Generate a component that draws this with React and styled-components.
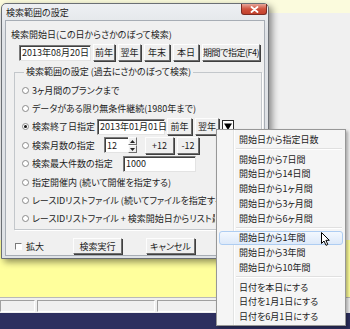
import styled, { createGlobalStyle } from 'styled-components';

const GlobalStyle = createGlobalStyle`
  html, body {
    margin: 0;
    padding: 0;
  }
  body {
    width: 350px;
    height: 329px;
    overflow: hidden;
    background: #f0f0f0;
  }
`;

const Desktop = styled.div`
  position: relative;
  width: 350px;
  height: 329px;
  overflow: hidden;
  display: flex;
  flex-direction: column;
  font-family: "Noto Sans CJK JP", "Liberation Sans", sans-serif;
  font-size: 9px;
  font-feature-settings: "palt";
  color: #1c1c1c;
`;

const TopBand = styled.div`
  height: 13px;
  background: #fbfbdd;
`;

const GrayArea = styled.div`
  height: 227px;
  background: #f0f0f0;
`;

const YellowArea = styled.div`
  flex: 1;
  background: #ffff9c;
`;

const StatusBar = styled.div`
  height: 16px;
  display: flex;
  gap: 2px;
  padding: 2px 0 0 0;
  box-sizing: border-box;
  background: #f0f0f0;
  border-top: 1px solid #b9b9b9;
`;

const StatusPanel = styled.div`
  width: ${(p) => p.$w}px;
  height: 12px;
  box-sizing: border-box;
  border: 1px solid;
  border-color: #a0a0a0 #fff #fff #a0a0a0;
`;

const NavyBar = styled.div`
  height: 16px;
  background: #2d2f5f;
`;

/* ---------- dialog window ---------- */

const Dialog = styled.div`
  position: absolute;
  left: 1px;
  top: 3px;
  width: 268px;
  height: 256px;
  box-sizing: border-box;
  display: flex;
  flex-direction: column;
  background: linear-gradient(#eef0f3, #dfe2e6 30px, #dfe2e6);
  border: 1px solid #6b6f75;
  border-radius: 5px 5px 0 0;
  box-shadow: 3px 3px 7px rgba(0, 0, 0, 0.45);
`;

const TitleBar = styled.div`
  height: 15px;
  flex: none;
  display: flex;
  align-items: flex-start;
  padding-left: 4px;
`;

const TitleText = styled.span`
  line-height: 15px;
  padding-top: 1px;
`;

const CloseButton = styled.div`
  margin-left: auto;
  margin-right: 1px;
  width: 26px;
  height: 11px;
  box-sizing: border-box;
  border: 1px solid #7b2b22;
  border-top: none;
  border-radius: 0 0 3px 3px;
  background: linear-gradient(#e7a69a, #d0523d 50%, #c2412c);
  display: flex;
  align-items: center;
  justify-content: center;
`;

const Client = styled.div`
  flex: 1;
  margin: 1px 3px 2px 3px;
  background: #f0f0f0;
  border: 1px solid #a7adb5;
  padding: 8px 0 0 5px;
  display: flex;
  flex-direction: column;
`;

const Caption = styled.div`
  line-height: 12px;
  white-space: nowrap;
`;

const Row = styled.div`
  display: flex;
  align-items: center;
  gap: ${(p) => p.$gap ?? 2}px;
  margin-left: ${(p) => p.$indent ?? 0}px;
  margin-top: ${(p) => p.$top ?? 0}px;
`;

const Button = styled.div`
  width: ${(p) => p.$w}px;
  height: ${(p) => p.$h ?? 17}px;
  box-sizing: border-box;
  display: flex;
  align-items: center;
  justify-content: center;
  white-space: nowrap;
  letter-spacing: ${(p) => (p.$tight ? '-0.5px' : '0')};
  background: #efefef;
  border: 1px solid;
  border-color: #fdfdfd #6e6e6e #6e6e6e #fdfdfd;
  box-shadow: 1px 1px 0 #3f3f3f;
  margin-right: 1px;
`;

const TextBox = styled.div`
  width: ${(p) => p.$w}px;
  height: 16px;
  box-sizing: border-box;
  display: flex;
  align-items: center;
  padding-left: 2px;
  white-space: nowrap;
  background: #fff;
  border: 1px solid;
  border-color: #7a7a7a #e3e3e3 #e3e3e3 #7a7a7a;
  box-shadow: inset 1px 1px 0 #404040;
`;

const Spinner = styled.div`
  width: 9px;
  height: 16px;
  display: flex;
  flex-direction: column;
  margin-left: -2px;
`;

const SpinHalf = styled.div`
  flex: 1;
  box-sizing: border-box;
  background: #efefef;
  border: 1px solid;
  border-color: #fdfdfd #6e6e6e #6e6e6e #fdfdfd;
  display: flex;
  align-items: center;
  justify-content: center;
`;

const DropButton = styled.div`
  width: 12px;
  height: 14px;
  box-sizing: border-box;
  background: #fff;
  border: 1px solid #2a2a2a;
  display: flex;
  align-items: center;
  justify-content: center;
`;

const Group = styled.fieldset`
  margin: 5px 2px 0 3px;
  padding: 0 0 0 7px;
  height: 162px;
  border: 1px solid #c3c7cb;
  box-shadow: 1px 1px 0 #fff;
  min-width: 0;
`;

const Legend = styled.legend`
  padding: 0 2px;
  margin-left: 2px;
  line-height: 12px;
  white-space: nowrap;
`;

const Options = styled.div`
  display: grid;
  grid-auto-rows: 18.4px;
  margin-top: 3px;
`;

const Option = styled.div`
  display: flex;
  align-items: center;
  white-space: nowrap;
`;

const RadioDot = styled.span`
  width: 7px;
  height: 7px;
  flex: none;
  box-sizing: border-box;
  border-radius: 50%;
  border: 1px solid #8a8a8a;
  background: #fff;
  margin-right: 3px;
  display: flex;
  align-items: center;
  justify-content: center;

  &::after {
    content: "";
    width: 3px;
    height: 3px;
    border-radius: 50%;
    background: ${(p) => (p.$on ? '#111' : 'transparent')};
  }
`;

const OptionText = styled.span`
  width: ${(p) => (p.$w ? `${p.$w}px` : 'auto')};
  flex: none;
  overflow: hidden;
`;

const BottomRow = styled.div`
  display: flex;
  align-items: center;
  margin: 8px 0 0 4px;
`;

const CheckBox = styled.span`
  width: 7px;
  height: 7px;
  box-sizing: border-box;
  border: 1px solid;
  border-color: #7a7a7a #fff #fff #7a7a7a;
  background: #fff;
  margin-right: 4px;
`;

const CheckLabel = styled.span`
  width: 47px;
`;

/* ---------- popup menu ---------- */

const Menu = styled.div`
  position: absolute;
  left: 216px;
  top: 129px;
  width: 130px;
  height: 197px;
  box-sizing: border-box;
  padding: 2px 0;
  border: 1px solid #979797;
  background:
    linear-gradient(to right, transparent 16px, #e2e3e3 16px, #e2e3e3 17px, #fff 17px, #fff 18px, transparent 18px),
    #f5f5f5;
  box-shadow: 2px 2px 3px rgba(0, 0, 0, 0.3);
`;

const MenuItem = styled.div`
  height: 14.75px;
  box-sizing: border-box;
  margin: 0 2px;
  padding-left: 19px;
  display: flex;
  align-items: center;
  white-space: nowrap;
  border: 1px solid ${(p) => (p.$active ? '#aecdf2' : 'transparent')};
  border-radius: 3px;
  background: ${(p) => (p.$active ? 'linear-gradient(#f3f8fe, #dde9f9)' : 'transparent')};
`;

const MenuSeparator = styled.div`
  height: 5px;
  margin-left: 19px;
  margin-right: 3px;
  display: flex;
  flex-direction: column;
  justify-content: center;

  &::before {
    content: "";
    height: 1px;
    background: #e0e0e0;
  }
  &::after {
    content: "";
    height: 1px;
    background: #fff;
  }
`;

const Cursor = styled.svg`
  position: absolute;
  left: 321px;
  top: 232px;
`;

const menuGroups = [
  ['開始日から指定日数'],
  ['開始日から7日間', '開始日から14日間', '開始日から1ヶ月間', '開始日から3ヶ月間', '開始日から6ヶ月間'],
  ['開始日から1年間', '開始日から3年間', '開始日から10年間'],
  ['日付を本日にする', '日付を1月1日にする', '日付を6月1日にする'],
];

const ArrowUp = () => (
  <svg width="5" height="3" viewBox="0 0 5 3"><path d="M0 3 L2.5 0 L5 3 Z" fill="#222" /></svg>
);

const ArrowDown = () => (
  <svg width="5" height="3" viewBox="0 0 5 3"><path d="M0 0 L2.5 3 L5 0 Z" fill="#222" /></svg>
);

export default function App() {
  return (
    <>
      <GlobalStyle />
      <Desktop>
        <TopBand />
        <GrayArea />
        <YellowArea />
        <StatusBar>
          <StatusPanel $w={35} />
          <StatusPanel $w={118} />
          <StatusPanel $w={120} />
        </StatusBar>
        <NavyBar />

        <Dialog>
          <TitleBar>
            <TitleText>検索範囲の設定</TitleText>
            <CloseButton>
              <svg width="9" height="7" viewBox="0 0 9 7">
                <path d="M1.5 1 L7.5 6 M7.5 1 L1.5 6" stroke="#fff" strokeWidth="1.8" strokeLinecap="round" />
              </svg>
            </CloseButton>
          </TitleBar>

          <Client>
            <Caption>検索開始日(この日からさかのぼって検索)</Caption>
            <Row $indent={8} $top={3}>
              <TextBox $w={72}>2013年08月20日</TextBox>
              <Button $w={22}>前年</Button>
              <Button $w={23}>翌年</Button>
              <Button $w={26}>年末</Button>
              <Button $w={26}>本日</Button>
              <Button $w={58} $tight>期間で指定(F4)</Button>
            </Row>

            <Group>
              <Legend>検索範囲の設定 (過去にさかのぼって検索)</Legend>
              <Options>
                <Option><RadioDot />3ヶ月間のブランクまで</Option>
                <Option><RadioDot />データがある限り無条件継続(1980年まで)</Option>
                <Option>
                  <RadioDot $on />
                  <OptionText $w={65}>検索終了日指定</OptionText>
                  <Row>
                    <TextBox $w={68}>2013年01月01日</TextBox>
                    <Button $w={25}>前年</Button>
                    <Button $w={24}>翌年</Button>
                    <DropButton>
                      <svg width="8" height="7" viewBox="0 0 8 7"><path d="M0 0.5 H8 L4 7 Z" fill="#000" /></svg>
                    </DropButton>
                  </Row>
                </Option>
                <Option>
                  <RadioDot />
                  <OptionText $w={72}>検索月数の指定</OptionText>
                  <TextBox $w={26}>12</TextBox>
                  <Spinner>
                    <SpinHalf><ArrowUp /></SpinHalf>
                    <SpinHalf><ArrowDown /></SpinHalf>
                  </Spinner>
                  <Row $indent={8}>
                    <Button $w={29}>+12</Button>
                    <Button $w={22}>-12</Button>
                  </Row>
                </Option>
                <Option>
                  <RadioDot />
                  <OptionText $w={91}>検索最大件数の指定</OptionText>
                  <TextBox $w={73}>1000</TextBox>
                </Option>
                <Option><RadioDot />指定開催内 (続いて開催を指定する)</Option>
                <Option><RadioDot />レースIDリストファイル (続いてファイルを指定する)</Option>
                <Option>
                  <RadioDot />
                  <OptionText $w={183}>レースIDリストファイル + 検索開始日からリスト最新日まで</OptionText>
                </Option>
              </Options>
            </Group>

            <BottomRow>
              <CheckBox />
              <CheckLabel>拡大</CheckLabel>
              <Button $w={49} $h={16}>検索実行</Button>
              <Row $indent={23}>
                <Button $w={49} $h={16}>キャンセル</Button>
              </Row>
            </BottomRow>
          </Client>
        </Dialog>

        <Menu>
          {menuGroups.map((group, gi) => (
            <div key={gi}>
              {gi > 0 && <MenuSeparator />}
              {group.map((label) => (
                <MenuItem key={label} $active={label === '開始日から1年間'}>{label}</MenuItem>
              ))}
            </div>
          ))}
        </Menu>

        <Cursor width="9" height="14" viewBox="0 0 9 14">
          <path d="M0.5 0.5 V11.5 L3 9 L5 13.3 L6.8 12.5 L4.9 8.3 H8.3 Z" fill="#fff" stroke="#000" strokeWidth="1" strokeLinejoin="round" />
        </Cursor>
      </Desktop>
    </>
  );
}
